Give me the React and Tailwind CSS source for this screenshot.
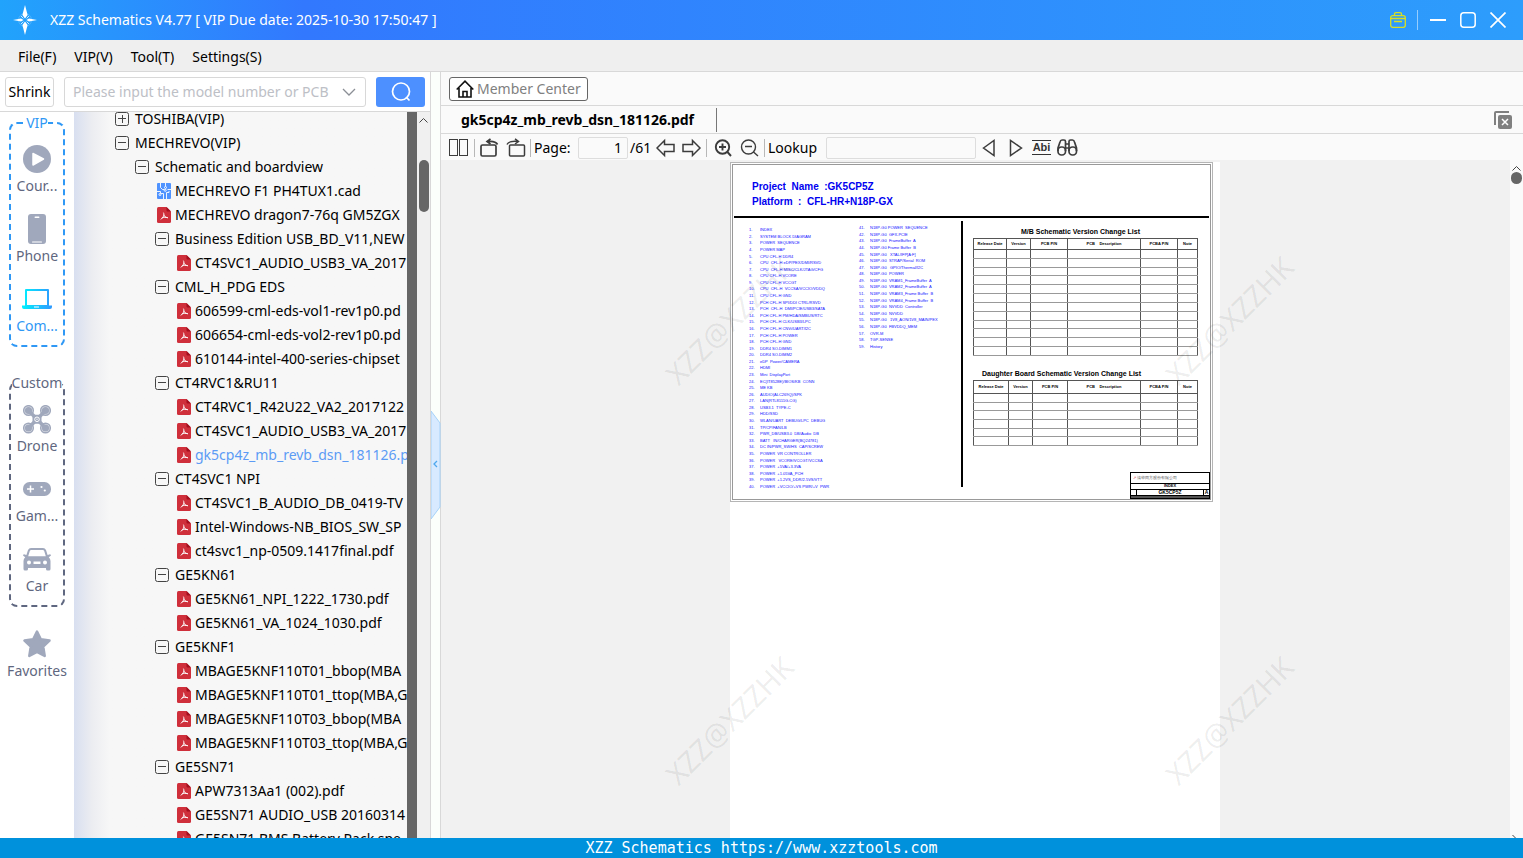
import React from "react";

const UI = "font-['Noto_Sans','Noto_Sans_CJK_SC',sans-serif]";

/* ---------- icons ---------- */

function LogoIcon() {
  return (
    <svg width="24" height="30" viewBox="0 0 24 30" aria-hidden="true">
      <circle cx="12" cy="15" r="6.5" fill="none" stroke="#8fd0ff" strokeWidth="1" opacity=".4" />
      <path d="M12 0 L14.6 10 L12 13.6 L9.4 10Z M12 30 L14.6 20 L12 16.4 L9.4 20Z M0 15 L8 13.4 L10.6 15 L8 16.6Z M24 15 L16 13.4 L13.4 15 L16 16.6Z" fill="#fff" />
      <path d="M8 11l2.4 2.4M16 11l-2.4 2.4M8 19l2.4-2.4M16 19l-2.4-2.4" stroke="#cfeaff" strokeWidth="1" />
    </svg>
  );
}

function ToggleIcon({ open }) {
  return (
    <svg width="14" height="14" viewBox="0 0 14 14" className="shrink-0" aria-hidden="true">
      <rect x=".5" y=".5" width="13" height="13" rx="2" fill="none" stroke="#444" />
      <path d={open ? "M3 6.5h8" : "M3 6.5h8M7.5 3v8"} stroke="#444" />
    </svg>
  );
}

function PdfIcon() {
  return (
    <svg width="14" height="16" viewBox="0 0 14 16" className="shrink-0" aria-hidden="true">
      <path d="M1.500 0H9.500L14 4.500V14.500Q14 16 12.500 16H1.500Q0 16 0 14.500V1.500Q0 0 1.500 0Z" fill="#cf2f3b" />
      <path d="M9.500 0L14 4.500H10.500Q9.500 4.500 9.500 3.500Z" fill="#a30f1e" />
      <path d="M6.600 6C7.600 8 6.300 10.500 4 12.200M6.900 8C7.400 9.600 8.600 10.500 10.400 10.700M5.200 10.900C6.800 10.200 8.500 10 10.400 10.600" fill="none" stroke="#fff" strokeWidth="1" strokeLinecap="round" />
    </svg>
  );
}

function CadIcon() {
  return (
    <svg width="14" height="16" viewBox="0 0 14 16" className="shrink-0" aria-hidden="true">
      <rect width="14" height="16" rx="1" fill="#4f93ff" />
      <g fill="none" stroke="#fff" strokeWidth=".9">
        <path d="M3.500 0V4.500L5.500 6.500H7M8.500 0V3.500M10.500 6.500H14M0 8.500H3.500V10.500M6.500 16V10.500H4M9.500 16V9.500H12V8" />
        <circle cx="8.500" cy="4.500" r="1" />
        <circle cx="8.200" cy="7.300" r="1" />
        <circle cx="3" cy="11.500" r="1" />
      </g>
    </svg>
  );
}

function CourseIcon() {
  return (
    <svg width="28" height="28" viewBox="0 0 28 28" aria-hidden="true">
      <circle cx="14" cy="14" r="14" fill="#a0a8bc" />
      <path d="M10 8.500L20.500 14L10 20Z" fill="#fff" stroke="#fff" strokeWidth="1.500" strokeLinejoin="round" />
    </svg>
  );
}

function PhoneIcon() {
  return (
    <svg width="18" height="30" viewBox="0 0 18 30" aria-hidden="true">
      <rect width="18" height="30" rx="3" fill="#a0a8bc" />
      <rect x="6.500" y="2.500" width="5" height="1.500" rx=".7" fill="#fff" />
      <rect x="4" y="27.500" width="10" height="1" rx=".5" fill="#fff" />
    </svg>
  );
}

function ComputerIcon() {
  return (
    <svg width="30" height="20" viewBox="0 0 30 20" aria-hidden="true">
      <defs>
        <linearGradient id="screen" x1="0" y1="0" x2="1" y2="0">
          <stop offset="0" stopColor="#00f2fe" />
          <stop offset="1" stopColor="#2f98ff" />
        </linearGradient>
      </defs>
      <path fillRule="evenodd" d="M4 0H26Q27 0 27 1V16.500H30V18Q30 20 28 20H2Q0 20 0 18V16.500H3V1Q3 0 4 0ZM5 2V16H25V2ZM12 17.500V18.500H17V17.500Z" fill="url(#screen)" />
    </svg>
  );
}

function DroneIcon() {
  const rotors = [[5.500, 5.500], [22.500, 5.500], [5.500, 23], [22.500, 23]];
  return (
    <svg width="28" height="29" viewBox="0 0 28 29" aria-hidden="true">
      {rotors.map(([x, y]) => (
        <g key={x + "-" + y}>
          <circle cx={x} cy={y} r="4.800" fill="#e3e6ec" stroke="#a0a8bc" strokeWidth="1.500" />
          <circle cx={x} cy={y} r="3.600" fill="#a0a8bc" />
        </g>
      ))}
      <path d="M6 6L22 22.500M22 6L6 22.500" stroke="#a0a8bc" strokeWidth="3.500" />
      <rect x="9.500" y="9.700" width="9" height="9" rx="2.500" fill="#a0a8bc" />
      <circle cx="14" cy="14.300" r="2.300" fill="#a0a8bc" stroke="#fff" strokeWidth="1" />
      <circle cx="14" cy="14.300" r=".7" fill="#fff" />
    </svg>
  );
}

function GameIcon() {
  return (
    <svg width="28" height="14" viewBox="0 0 28 14" aria-hidden="true">
      <rect width="28" height="14" rx="6.500" fill="#a0a8bc" />
      <path d="M7.500 3.500V10.500M4 7H11" stroke="#fff" strokeWidth="1.500" />
      <circle cx="18.500" cy="5" r="1.100" fill="#fff" />
      <circle cx="21.800" cy="8.500" r="1.100" fill="#fff" />
    </svg>
  );
}

function CarIcon() {
  return (
    <svg width="28" height="24" viewBox="0 0 28 24" aria-hidden="true">
      <path fillRule="evenodd" d="M8 1H20Q22 1 23 3L24.600 8L27 7.200Q28 7.500 28 8.500L25.800 10.300Q27.500 11.800 27.500 14V22Q27.500 23.500 26 23.500H24.500Q23 23.500 23 22V21H5V22Q5 23.500 3.500 23.500H2Q.5 23.500 .5 22V14Q.5 11.800 2.200 10.300L0 8.500Q0 7.500 1 7.200L3.400 8L5 3Q6 1 8 1ZM8.200 3Q7.200 3 6.800 4L5.200 9.200H22.800L21.200 4Q20.800 3 19.800 3ZM6 13.500A2 2 0 1 0 6 17.500A2 2 0 1 0 6 13.500ZM22 13.500A2 2 0 1 0 22 17.500A2 2 0 1 0 22 13.500ZM10.500 14.500V17H17.500V14.500Z" fill="#a0a8bc" />
    </svg>
  );
}

function StarIcon() {
  return (
    <svg width="28" height="28" viewBox="0 0 28 28" aria-hidden="true">
      <path d="M14 1.500L17.800 9.200L26.500 10.500L20.200 16.500L21.700 26L14 21.800L6.300 26L7.800 16.500L1.500 10.500L10.200 9.200Z" fill="#a0a8bc" stroke="#a0a8bc" strokeWidth="2.500" strokeLinejoin="round" />
    </svg>
  );
}

function Icon({ w, h = 20, children, sw = "1.5" }) {
  return (
    <svg width={w} height={h} viewBox={`0 0 ${w} ${h}`} fill="none" stroke="#3c3c3c" strokeWidth={sw} aria-hidden="true">
      {children}
    </svg>
  );
}

/* ---------- tree ---------- */

const TREE = [
  [0, "closed", "TOSHIBA(VIP)"],
  [0, "open", "MECHREVO(VIP)"],
  [1, "open", "Schematic and boardview"],
  [2, "cad", "MECHREVO F1 PH4TUX1.cad"],
  [2, "pdf", "MECHREVO dragon7-76q GM5ZGX"],
  [2, "open", "Business Edition USB_BD_V11,NEW"],
  [3, "pdf", "CT4SVC1_AUDIO_USB3_VA_2017"],
  [2, "open", "CML_H_PDG EDS"],
  [3, "pdf", "606599-cml-eds-vol1-rev1p0.pd"],
  [3, "pdf", "606654-cml-eds-vol2-rev1p0.pd"],
  [3, "pdf", "610144-intel-400-series-chipset"],
  [2, "open", "CT4RVC1&RU11"],
  [3, "pdf", "CT4RVC1_R42U22_VA2_2017122"],
  [3, "pdf", "CT4SVC1_AUDIO_USB3_VA_2017"],
  [3, "pdf", "gk5cp4z_mb_revb_dsn_181126.p", true],
  [2, "open", "CT4SVC1 NPI"],
  [3, "pdf", "CT4SVC1_B_AUDIO_DB_0419-TV"],
  [3, "pdf", "Intel-Windows-NB_BIOS_SW_SP"],
  [3, "pdf", "ct4svc1_np-0509.1417final.pdf"],
  [2, "open", "GE5KN61"],
  [3, "pdf", "GE5KN61_NPI_1222_1730.pdf"],
  [3, "pdf", "GE5KN61_VA_1024_1030.pdf"],
  [2, "open", "GE5KNF1"],
  [3, "pdf", "MBAGE5KNF110T01_bbop(MBA"],
  [3, "pdf", "MBAGE5KNF110T01_ttop(MBA,G"],
  [3, "pdf", "MBAGE5KNF110T03_bbop(MBA"],
  [3, "pdf", "MBAGE5KNF110T03_ttop(MBA,G"],
  [2, "open", "GE5SN71"],
  [3, "pdf", "APW7313Aa1 (002).pdf"],
  [3, "pdf", "GE5SN71 AUDIO_USB 20160314"],
  [3, "pdf", "GE5SN71 BMS Battery Pack spe"],
];

const INDENT = ["pl-[41px]", "pl-[61px]", "pl-[81px]", "pl-[101px]"];

function TreeRow({ row }) {
  const [level, kind, name, active] = row;
  const folder = kind === "open" || kind === "closed";
  return (
    <li className={"flex h-6 items-center whitespace-nowrap " + INDENT[level]}>
      <button className={"flex items-center " + (active ? "text-[#5c9bf5]" : "text-black")}>
        <span className={"flex w-5 shrink-0 " + (folder ? "" : "pl-[2px]")}>
          {folder ? <ToggleIcon open={kind === "open"} /> : kind === "cad" ? <CadIcon /> : <PdfIcon />}
        </span>
        {name}
      </button>
    </li>
  );
}

/* ---------- side rail ---------- */

function RailItem({ icon, label, color = "text-[#5f6780]" }) {
  return (
    <button className={"flex h-[70px] w-full flex-col items-center pt-[11px] " + color}>
      <span className="flex h-[30px] items-center justify-center">{icon}</span>
      <span className="mt-[2px] leading-5">{label}</span>
    </button>
  );
}

/* ---------- document sheet ---------- */

const INDEX_A = [
  "INDEX", "SYSTEM BLOCK DIAGRAM", "POWER  SEQUENCE", "POWER MAP", "CPU CFL-H DDR4",
  "CPU  CFL-H eDP/PEX/DMI/RSVD", "CPU  CFL-H MISC/CLK/JTAG/CFG", "CPU CFL-H VCORE", "CPU CFL-H VCCGT",
  "CPU  CFL-H  VCCSA/VCCIO/VDDQ", "CPU CFL-H GND", "PCH CFL-H SPI/DDI CTRL/RSVD", "PCH  CFL-H  DMI/PCIE/USB3/SATA",
  "PCH CFL-H PM/HDA/SMBUS/RTC", "PCH CFL-H CLK/USB3/LPC", "PCH CFL-H CNVi/UART/I2C", "PCH CFL-H POWER", "PCH CFL-H GND",
  "DDR4 SO-DIMM1", "DDR4 SO-DIMM2", "eDP  Power/CAMERA", "HDMI", "Mini  DisplayPort", "EC(IT8528E)/BIOS/KB  CONN",
  "ME KB", "AUDIO(ALC269Q)/SPK", "LAN(RTL8111G-CG)", "USB3.1  TYPE-C", "HDD/SSD", "WLAN/UART  DEBUG/LPC  DEBUG",
  "TP/CP/FAN/LB", "PWR_DB/USB3.0  DB/Audio  DB", "BATT   IN/CHARGER(BQ24781)", "DC IN/PWR_SW/HS  CAP/SCREW",
  "POWER  VR CONTROLLER", "POWER   VCORE/VCCGT/VCCSA", "POWER  +5VA/+3.3VA", "POWER  +1.05VA_PCH",
  "POWER  +1.2VS_DDR/2.5VS/VTT", "POWER  +VCCIO/+VS PWR/+V  PWR",
];

const INDEX_B = [
  "N18P-G0 POWER  SEQUENCE", "N18P-G0  GFX-PCIE", "N18P-G0  FrameBuffer  A", "N18P-G0 Frame Buffer  B",
  "N18P-G0   XTAL/IFP[A:F]", "N18P-G0  STRAP/Serial  ROM", "N18P-G0   GPIO/Thermal/I2C", "N18P-G0  POWER",
  "N18P-G0  VRAM1_FrameBuffer  A", "N18P-G0  VRAM2_FrameBuffer  A", "N18P-G0  VRAM3_Frame Buffer  B",
  "N18P-G0  VRAM4_Frame Buffer  B", "N18P-G0  NVVDD  Controller", "N18P-G0  NVVDD", "N18P-G0   1V8_AON/1V8_MAIN/PEX",
  "N18P-G0  FBVDDQ_MEM", "OVR-M", "TGP-SENSE", "History",
];

function IndexList({ items, start, className }) {
  return (
    <ol className={"flex flex-col text-[4px] leading-none text-[#1010ff] " + className}>
      {items.map((t, i) => (
        <li key={t} className="flex flex-1 items-center whitespace-pre">
          <span className="w-[11px]">{start + i}.</span>
          {t}
        </li>
      ))}
    </ol>
  );
}

const HEADS = ["Release Date", "Version", "PCB P/N", "PCB    Description", "PCBA P/N", "Note"];

function ChangeTable({ title, rows, widths, size, head, titleClass }) {
  return (
    <section>
      <h3 className={"whitespace-pre text-[7px] font-bold leading-[8px] " + titleClass}>{title}</h3>
      <table className={"mt-[2px] w-[224px] table-fixed border-collapse border border-[#555] text-[4px] leading-none " + size}>
        <colgroup>{widths.map((w, i) => <col key={i} className={w} />)}</colgroup>
        <thead>
          <tr className={head}>
            {HEADS.map((h) => (
              <th key={h} className="whitespace-pre border border-[#555] p-0 text-center font-bold">{h}</th>
            ))}
          </tr>
        </thead>
        <tbody>
          {Array.from({ length: rows }, (_, r) => (
            <tr key={r}>
              {HEADS.map((h) => <td key={h} className="border border-x-[#555] border-y-[#999] p-0" />)}
            </tr>
          ))}
        </tbody>
      </table>
    </section>
  );
}

function Sheet() {
  return (
    <article className="relative h-[340px] w-[483px] border border-[#b5b5b5] bg-white p-px font-['Liberation_Sans',Arial,sans-serif] text-black">
      <div className="flex h-full flex-col border border-[#999]">
        <header className="whitespace-pre pl-[19px] pt-[14px] text-[10px] font-bold leading-[15px] text-[#0000f0]">
          <p>Project  Name  :GK5CP5Z</p>
          <p>Platform  :  CFL-HR+N18P-GX</p>
        </header>
        <div className="mx-px mt-[7px] h-[2px] bg-black" />
        <div className="flex flex-1">
          <div className="mt-[3px] flex h-[266px] w-[230px] border-r-2 border-black pl-[16px]">
            <IndexList items={INDEX_A} start={1} className="mt-[6px] h-[263px] w-[110px]" />
            <IndexList items={INDEX_B} start={41} className="mt-[4px] h-[125px]" />
          </div>
          <div className="flex flex-1 flex-col pl-[10px] pt-[10px]">
            <ChangeTable
              title="M/B Schematic Version Change List"
              rows={12}
              widths={["w-[33px]", "w-[24px]", "w-[37px]", "w-[73px]", "w-[37px]", "w-[20px]"]}
              size="h-[118px]"
              head="h-[11px]"
              titleClass="pl-[48px]"
            />
            <div className="mt-[14px]">
              <ChangeTable
                title="Daughter Board Schematic Version Change List"
                rows={6}
                widths={["w-[35px]", "w-[24px]", "w-[35px]", "w-[73px]", "w-[37px]", "w-[20px]"]}
                size="h-[66px]"
                head="h-[13px]"
                titleClass="pl-[9px]"
              />
            </div>
            <div className="mt-auto flex h-[27px] w-[80px] flex-col self-end border border-black text-[4px] leading-none">
              <p className="flex h-[11px] items-center border-b border-black pl-[2px] text-[#555]">
                <span className="mr-px text-[#d22]">↗</span>清华同方股份有限公司
              </p>
              <p className="h-[6px] border-b border-black text-center font-bold">INDEX</p>
              <p className="flex flex-1 items-center border-b border-black text-[5px] font-bold">
                <span className="h-full w-[6px] border-r border-black" />
                <span className="flex-1 text-center">GK5CP5Z</span>
                <span className="h-full w-[6px] border-l border-black text-center">A</span>
              </p>
              <p className="h-[2px] bg-[#555]" />
            </div>
          </div>
        </div>
      </div>
    </article>
  );
}

function Watermark({ className }) {
  return (
    <span className={"pointer-events-none absolute -translate-x-1/2 -translate-y-1/2 -rotate-45 whitespace-nowrap text-[29px] leading-none text-black/8 " + className} aria-hidden="true">
      XZZ@XZZHK
    </span>
  );
}

const Sep = ({ className = "" }) => <span className={"h-[18px] w-px bg-[#b8b8b8] " + className} />;

export default function App() {
  return (
    <div className={"flex h-screen flex-col overflow-hidden bg-white text-sm text-black " + UI}>
      <header className="flex h-10 shrink-0 items-center bg-linear-to-r from-[#21a3fc] via-[#3278fe] via-20% to-[#2d9dfc] pl-[13px] pr-[17px] text-white">
        <LogoIcon />
        <h1 className="ml-[13px] whitespace-nowrap">XZZ Schematics V4.77 [ VIP Due date: 2025-10-30 17:50:47 ]</h1>
        <div className="ml-auto flex items-center">
          <button aria-label="Toolbox">
            <svg width="16" height="16" viewBox="0 0 16 16" fill="none" stroke="#d9e021" strokeWidth="1.300">
              <rect x=".7" y="3.700" width="14.600" height="11.600" rx="2" />
              <path d="M4.500 3.500V2Q4.500 .7 6 .7H10Q11.500 .7 11.500 2V3.500M.7 6.500H15.300M4 9.500H12" />
            </svg>
          </button>
          <span className="ml-[11px] mr-3 h-5 w-px bg-white/50" />
          <button aria-label="Minimize" className="flex">
            <svg width="16" height="16" viewBox="0 0 16 16" stroke="#fff" strokeWidth="2"><path d="M0 8H16" /></svg>
          </button>
          <button aria-label="Maximize" className="ml-[14px] flex">
            <svg width="16" height="16" viewBox="0 0 16 16" fill="none" stroke="#fff" strokeWidth="1.500"><rect x=".8" y=".8" width="14.400" height="14.400" rx="3" /></svg>
          </button>
          <button aria-label="Close" className="ml-[14px] flex">
            <svg width="16" height="16" viewBox="0 0 16 16" stroke="#fff" strokeWidth="1.700"><path d="M.5 .5L15.500 15.500M15.500 .5L.5 15.500" /></svg>
          </button>
        </div>
      </header>

      <nav className="flex h-8 shrink-0 items-center gap-[18px] border-b border-[#d8d8d8] bg-[#efefef] pl-[18px] pt-[2px]">
        <button>File(F)</button>
        <button>VIP(V)</button>
        <button>Tool(T)</button>
        <button>Settings(S)</button>
      </nav>

      <main className="flex min-h-0 flex-1">
        <aside className="flex w-[431px] shrink-0 flex-col border-r border-[#d8d8d8]">
          <form className="flex h-10 shrink-0 items-center border-b border-[#d8d8d8] pl-[5px] pt-px" onSubmit={(e) => e.preventDefault()}>
            <button type="button" className="h-[30px] w-[49px] rounded-[3px] border border-[#d8d8d8] text-center">Shrink</button>
            <div className="ml-[10px] flex h-[30px] w-[302px] items-center rounded-[3px] border border-[#d8d8d8] pl-2 pr-[9px]">
              <input aria-label="Model number" placeholder="Please input the model number or PCB" className="min-w-0 flex-1 text-sm outline-none placeholder:text-[#bdc0c6]" />
              <button type="button" aria-label="Show list" className="ml-[7px] flex">
                <svg width="14" height="8" viewBox="0 0 14 8" fill="none" stroke="#8b8f96" strokeWidth="1.300"><path d="M1 1L7 7L13 1" /></svg>
              </button>
            </div>
            <button type="submit" aria-label="Search" className="ml-[10px] flex h-[30px] w-[49px] items-center justify-center rounded-[3px] bg-[#4d90ff]">
              <svg width="20" height="20" viewBox="0 0 20 20" fill="none" stroke="#fff" strokeWidth="1.700"><circle cx="10" cy="9.500" r="8.500" /><path d="M15 15L18.500 18.500" /></svg>
            </button>
          </form>
          <div className="flex min-h-0 flex-1">
            <nav className="flex w-[74px] shrink-0 flex-col items-center pt-px">
              <fieldset className="w-14 rounded-[8px] border-2 border-dashed border-[#2f98f5] pb-[2px]">
                <legend className="mx-auto leading-5 text-[#2f98f5]">VIP</legend>
                <RailItem icon={<CourseIcon />} label="Cour..." />
                <RailItem icon={<PhoneIcon />} label="Phone" />
                <RailItem icon={<ComputerIcon />} label="Com..." color="text-[#2f98f5]" />
              </fieldset>
              <fieldset className="mt-[26px] w-14 rounded-[8px] border-2 border-dashed border-[#5f6780] pb-[2px]">
                <legend className="mx-auto leading-5 text-[#5f6780]">Custom</legend>
                <RailItem icon={<DroneIcon />} label="Drone" />
                <RailItem icon={<GameIcon />} label="Gam..." />
                <RailItem icon={<CarIcon />} label="Car" />
              </fieldset>
              <div className="mt-[11px] w-full">
                <RailItem icon={<StarIcon />} label="Favorites" />
              </div>
            </nav>
            <div className="min-w-0 flex-1 overflow-hidden bg-linear-to-r from-[#d8dff0] via-[#ecedf1] via-[18px] to-[#f7f7f7] to-[36px]">
              <ul className="-mt-[5px]">
                {TREE.map((row, i) => <TreeRow key={i} row={row} />)}
              </ul>
            </div>
            <div className="w-[10px] bg-[#666]" />
            <div className="flex w-[13px] flex-col items-center bg-[#f0f0f0] pt-[6px]">
              <svg width="9" height="5" viewBox="0 0 9 5" fill="none" stroke="#444"><path d="M.5 4.500L4.500 .5L8.500 4.500" /></svg>
              <div className="mt-[37px] h-[52px] w-[10px] rounded-full bg-[#666]" />
            </div>
          </div>
        </aside>

        <div className="flex w-[10px] shrink-0 items-center border-r border-[#d8d8d8] bg-[#fbfffb] pt-5">
          <button aria-label="Collapse panel" className="flex">
            <svg width="10" height="112" viewBox="0 0 10 112" className="-mr-px" aria-hidden="true">
              <path d="M0 2L9 14V98L0 110Z" fill="#d8eaff" stroke="#a6d2f8" />
              <path d="M6 52L3 55L6 58" fill="none" stroke="#4fa8ee" strokeWidth="1.300" />
            </svg>
          </button>
        </div>

        <section className="flex min-w-0 flex-1 flex-col bg-[#fafafa]">
          <div className="flex h-[34px] shrink-0 items-center border-b border-[#d8d8d8] pl-2">
            <button className="flex h-6 items-center gap-[3px] rounded-[3px] border border-[#666] bg-white px-[6px] text-[#808080]">
              <svg width="18" height="18" viewBox="0 0 18 18" fill="none" stroke="#111" strokeWidth="1.600"><path d="M.7 9.500L9 1.200L17.300 9.500M3 8V17H15V8M7 17V11.500H11V17" /></svg>
              Member Center
            </button>
          </div>
          <div className="flex h-7 shrink-0 items-center border-b border-[#d8d8d8] pl-5 pr-[11px]">
            <button className="font-bold">gk5cp4z_mb_revb_dsn_181126.pdf</button>
            <span className="ml-[22px] h-6 w-px bg-[#777]" />
            <button aria-label="Close all tabs" className="ml-auto flex">
              <svg width="18" height="18" viewBox="0 0 18 18" fill="none"><path d="M1 14V2Q1 1 2 1H15" stroke="#808080" strokeWidth="2" /><rect x="4" y="4" width="14" height="14" rx="2" fill="#808080" /><path d="M8 8L14 14M14 8L8 14" stroke="#fff" strokeWidth="1.500" /></svg>
            </button>
          </div>
          <div className="flex h-[26px] shrink-0 items-center pl-2 pt-px">
            <button aria-label="Two pages"><Icon w={20} sw="1"><rect x=".5" y="1.500" width="8" height="16" /><rect x="10.500" y="1.500" width="8" height="16" /></Icon></button>
            <Sep className="ml-[5px]" />
            <button aria-label="Rotate left" className="ml-[5px]"><Icon w={20} sw="1.700"><rect x="1" y="7" width="15" height="11" rx="1.500" /><path d="M17.500 6.500Q15.500 2.500 7.500 3.500M10.500 .8L7 3.500L10.500 6" /></Icon></button>
            <button aria-label="Rotate right" className="ml-[6px]"><Icon w={20}><rect x="3.500" y="7" width="15" height="11" rx="1" /><path d="M1 6.500Q3 2.500 12 3.500M9 .8L12.500 3.500L9 6" /></Icon></button>
            <Sep className="ml-[4px]" />
            <label htmlFor="page" className="ml-[3px] w-11">Page:</label>
            <input id="page" defaultValue="1" className="h-[22px] w-[50px] rounded-[2px] border border-[#ddd] pr-[5px] text-right" />
            <span className="ml-[2px] w-[25px]">/61</span>
            <button aria-label="Previous page" className="ml-px"><Icon w={20}><path d="M1 10L8.500 2.500V6.500H18V13.500H8.500V17.500Z" /></Icon></button>
            <button aria-label="Next page" className="ml-[6px]"><Icon w={20}><path d="M18 10L10.500 2.500V6.500H1V13.500H10.500V17.500Z" /></Icon></button>
            <Sep className="ml-[4px]" />
            <button aria-label="Zoom in" className="ml-[7px]"><Icon w={20} sw="1.900"><circle cx="8.500" cy="9" r="6.700" /><path d="M13 13.500L17 18M5 9H12M8.500 5.500V12.500" /></Icon></button>
            <button aria-label="Zoom out" className="ml-[6px]"><Icon w={20} sw="1.400"><circle cx="8.500" cy="9" r="7" /><path d="M13.500 14L18 18M5 8.500H12" /></Icon></button>
            <Sep className="ml-[4px]" />
            <label htmlFor="lookup" className="ml-[3px] w-[58px]">Lookup</label>
            <input id="lookup" className="h-[22px] w-[150px] rounded-[2px] border border-[#ddd] px-1" />
            <button aria-label="Find previous" className="ml-[6px]"><Icon w={14}><path d="M1.500 10L12 2.500V17.500Z" /></Icon></button>
            <button aria-label="Find next" className="ml-[13px]"><Icon w={14}><path d="M12.500 10L1.500 2.500V17.500Z" /></Icon></button>
            <button className="ml-[9px] h-[15px] w-[19px] border-y border-[#333] text-center font-['Liberation_Sans',Arial,sans-serif] text-[11px] font-bold leading-[13px] text-[#333]">Abi</button>
            <button aria-label="Match words" className="ml-[6px]">
              <Icon w={21} sw="1.700"><rect x="1" y="9" width="7.500" height="8" rx="3.500" /><rect x="12" y="9" width="7.500" height="8" rx="3.500" /><path d="M1 13V10L3 4Q3.500 2 5 2H7Q8.500 2 8.500 3.500V13M19.500 13V10L17.500 4Q17 2 15.500 2H13.500Q12 2 12 3.500V13M8.500 6H12M8.500 10H12" /></Icon>
            </button>
          </div>

          <div className="relative flex min-h-0 flex-1 overflow-hidden">
            <div className="flex min-w-0 flex-1 justify-center overflow-hidden bg-[#f1f1f1] pr-px pt-[2px]">
              <div className="w-[490px] shrink-0 bg-white"><Sheet /></div>
            </div>
            <div className="flex w-[13px] shrink-0 flex-col items-center pt-[6px]">
              <svg width="9" height="5" viewBox="0 0 9 5" fill="none" stroke="#444"><path d="M.5 4.500L4.500 .5L8.500 4.500" /></svg>
              <div className="mt-px h-3 w-[11px] rounded-full bg-[#666]" />
              <svg width="9" height="3" viewBox="0 0 9 3" className="mt-auto" fill="none" stroke="#444"><path d="M.5 0L3.500 3" /></svg>
            </div>
            <Watermark className="left-[288px] top-[160px]" />
            <Watermark className="left-[788px] top-[160px]" />
            <Watermark className="left-[288px] top-[560px]" />
            <Watermark className="left-[788px] top-[560px]" />
          </div>
        </section>
      </main>

      <footer className="flex h-5 shrink-0 items-center justify-center bg-[#0091dc] font-['DejaVu_Sans_Mono',monospace] text-[15px] leading-5 text-white">
        XZZ Schematics https://www.xzztools.com
      </footer>
    </div>
  );
}
